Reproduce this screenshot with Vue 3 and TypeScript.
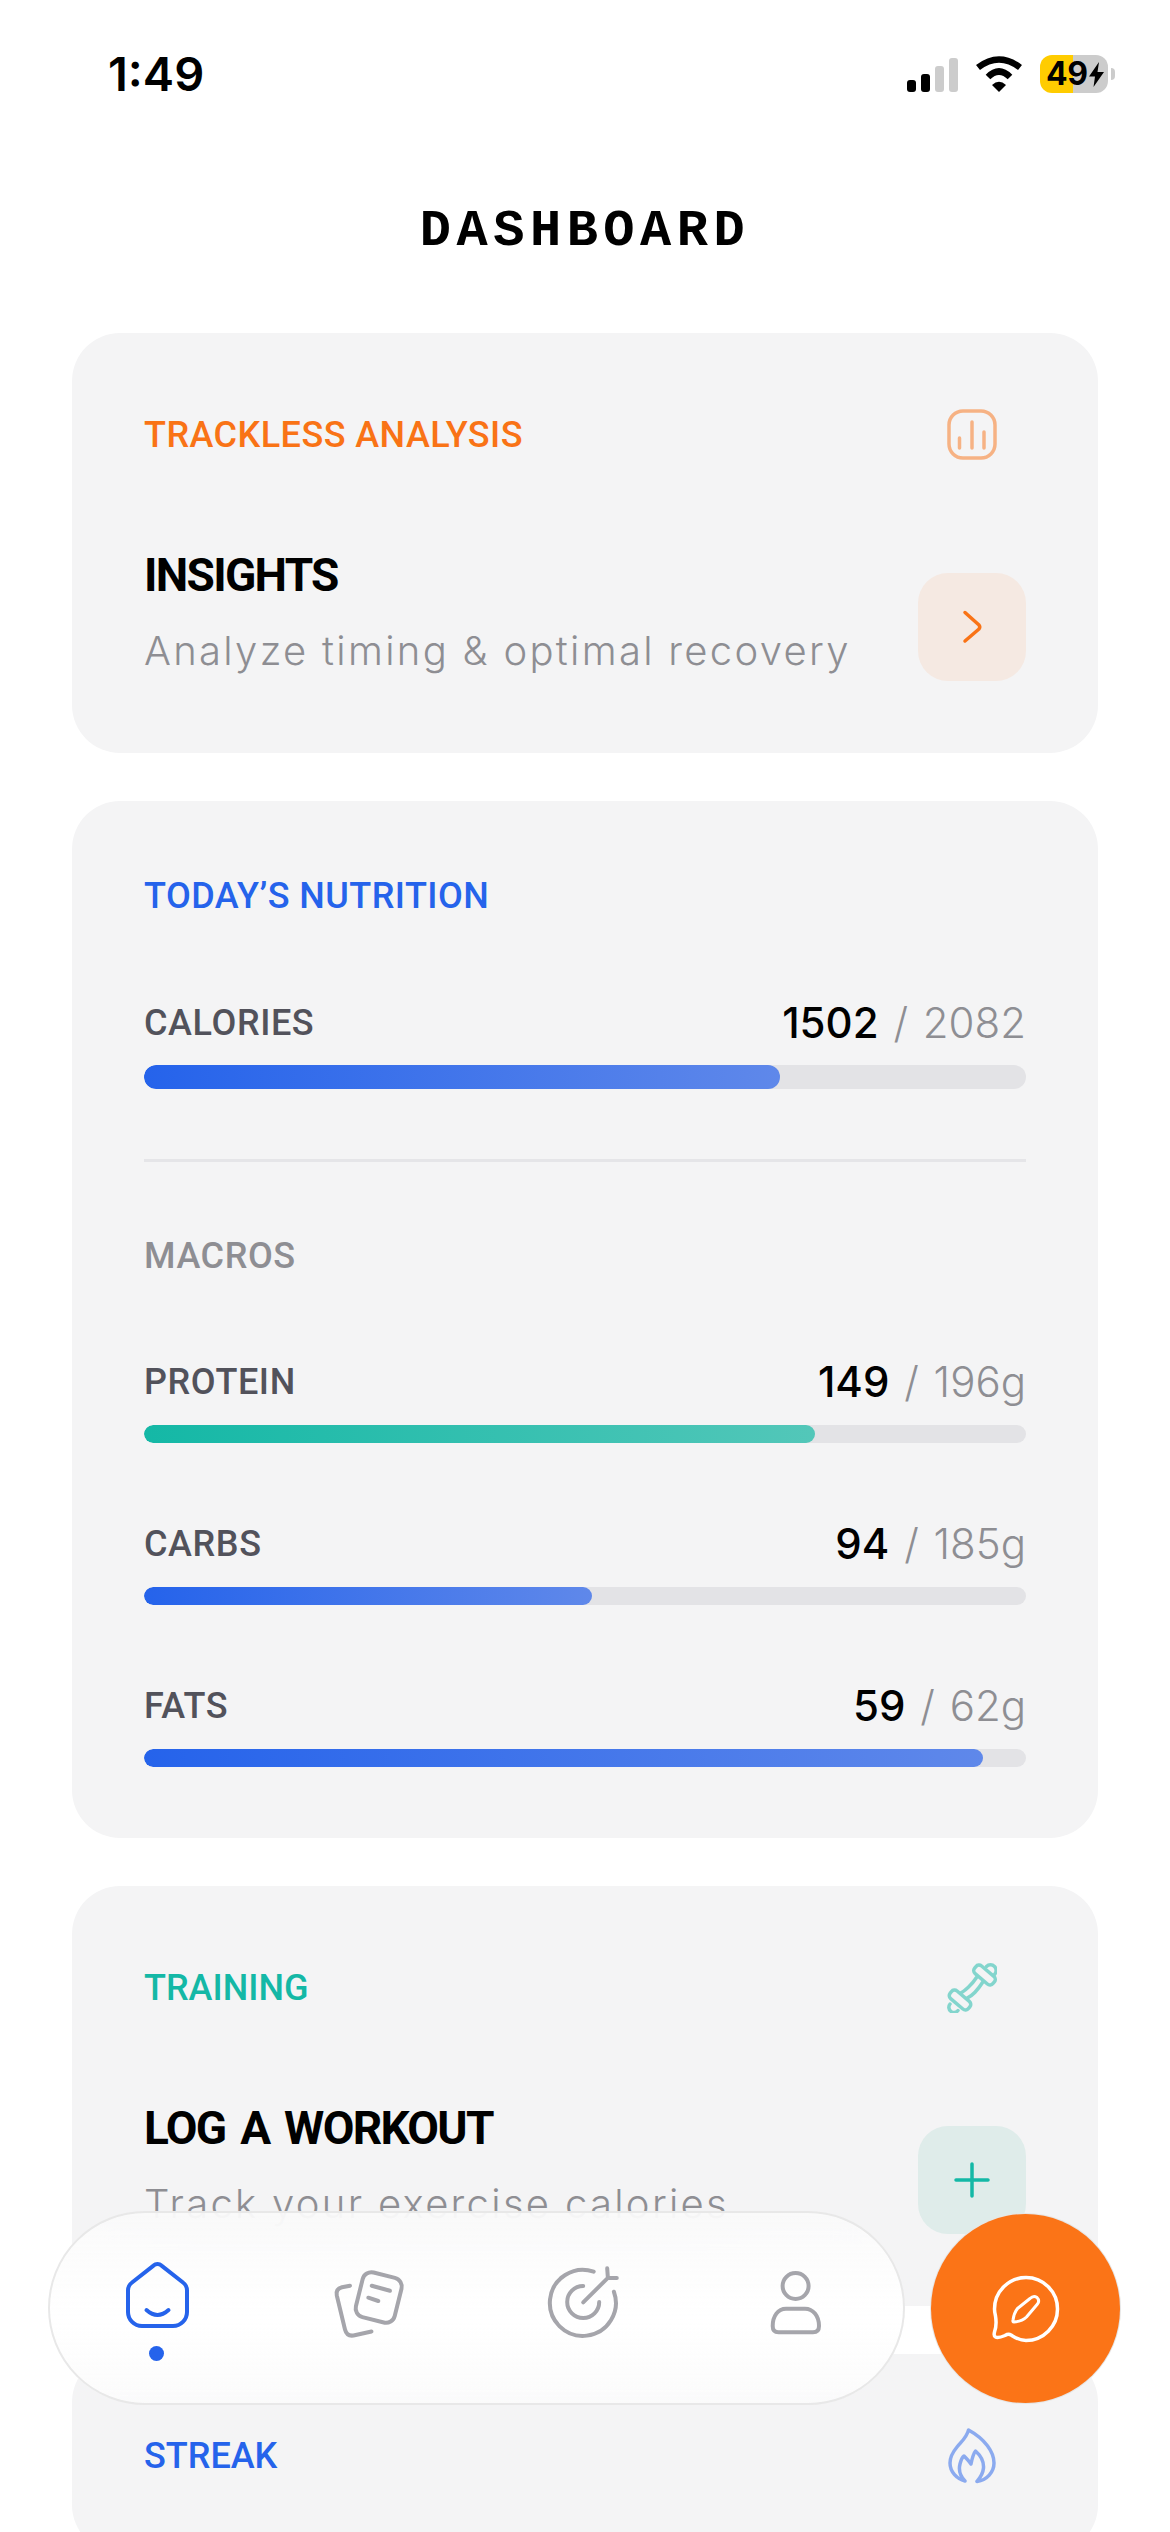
<template>
  <div class="screen">
    <div class="status">
      <span class="time">1:49</span>
      <div class="status-right">
        <div class="signal">
          <i class="on s1"></i><i class="on s2"></i><i class="s3"></i><i class="s4"></i>
        </div>
        <svg class="wifi" width="48" height="36" viewBox="0 0 48 36" fill="none" stroke="#000" stroke-width="6.5">
          <path d="M3 11.5Q24-4.5 45 11.5" />
          <path d="M13 21Q24 10 35 21" />
          <path d="M24 36L17 29Q24 22.5 31 29Z" fill="#000" stroke="none" />
        </svg>
        <div class="battery">
          <span class="batt-num">49</span>
          <svg width="15" height="25" viewBox="0 0 15 25"><path d="M10 0L0 14.5H6L4.5 25L15 10H8.5Z" fill="#000" /></svg>
        </div>
        <i class="nub"></i>
      </div>
    </div>

    <h1 class="page-title">DASHBOARD</h1>

    <section class="card">
      <div class="card-head">
        <span class="label orange wide">TRACKLESS ANALYSIS</span>
        <svg class="tint" width="50" height="51" viewBox="0 0 50 51" fill="none" stroke="#f97316" stroke-width="3.5" stroke-linecap="round">
          <rect x="2" y="2" width="46" height="47" rx="14" />
          <path d="M12.5 29V39M25 13V39M37 23V39" />
        </svg>
      </div>
      <div class="card-body">
        <div class="copy">
          <div class="title">INSIGHTS</div>
          <div class="sub">Analyze timing &amp; optimal recovery</div>
        </div>
        <div class="action action-orange">
          <svg width="24" height="36" viewBox="0 0 24 36" fill="none" stroke="#f97316" stroke-width="3.5" stroke-linecap="round" stroke-linejoin="round">
            <path d="M5 3.5L19 16Q20.5 18 19 20L5 32" />
          </svg>
        </div>
      </div>
    </section>

    <section class="card nutrition">
      <div class="nutrition-head label blue wide">TODAY’S NUTRITION</div>
      <div class="row calories-row">
        <span class="row-name">CALORIES</span>
        <span class="amount"><b>{{ calories.value }}</b> / {{ calories.goal }}</span>
      </div>
      <div class="track thick">
        <div class="fill" :style="{ width: pct(calories) + '%' }"></div>
      </div>
      <div class="divider"></div>
      <div class="macros-label">MACROS</div>
      <div v-for="m in macros" :key="m.name" class="macro">
        <div class="row">
          <span class="row-name">{{ m.name }}</span>
          <span class="amount"><b>{{ m.value }}</b> / {{ m.goal }}g</span>
        </div>
        <div class="track">
          <div class="fill" :class="{ teal: m.teal }" :style="{ width: pct(m) + '%' }"></div>
        </div>
      </div>
    </section>

    <section class="card">
      <div class="card-head">
        <span class="label teal-text">TRAINING</span>
        <svg class="tint" width="50" height="51" viewBox="0 0 50 51" fill="none" stroke="#14b8a6" stroke-width="3.5" stroke-linecap="round" stroke-linejoin="round">
          <rect x="25.5" y="8" width="24" height="10" rx="4" transform="rotate(40 37.5 13)" />
          <rect x="1" y="33" width="24" height="10" rx="4" transform="rotate(40 13 38)" />
          <path d="M29.7 15.3Q26 21 21.3 25.3T14.7 30.3M35.7 20.3Q32 26 28 30.3T19.7 36.3" />
          <path d="M39.5 4.5A5.5 5.5 0 1 1 47.5 12.5M3 42A5 5 0 1 0 11 48.5" />
        </svg>
      </div>
      <div class="card-body">
        <div class="copy">
          <div class="title">LOG A WORKOUT</div>
          <div class="sub">Track your exercise calories</div>
        </div>
        <div class="action action-teal">
          <svg width="36" height="36" viewBox="0 0 36 36" stroke="#14b8a6" stroke-width="3.5" stroke-linecap="round">
            <path d="M2 18H34M18 2V34" />
          </svg>
        </div>
      </div>
    </section>

    <section class="card">
      <div class="card-head">
        <span class="label blue">STREAK</span>
        <svg class="tint" width="50" height="57" viewBox="0 0 50 57" fill="none" stroke="#2563eb" stroke-width="3.5" stroke-linejoin="round">
          <path d="M21.5 3C20 10 15 14 10 20C5 26 3 31 3 36C3 45 10 52 18 54C13 49 11.5 43 13 37C14 33 15.5 30 17 29C19 31 22 34 24 37C25 32 26 27 28.5 24C33 28 37 34 36.5 41C36 46 33 51 30 54.5C40 53 47 45 47 36C47 25 38 12 21.5 3Z" />
        </svg>
      </div>
    </section>

    <nav class="tabbar">
      <div class="tab">
        <svg width="80" height="80" viewBox="0 0 80 80" fill="none" stroke="#2563eb" stroke-width="4" stroke-linecap="round" stroke-linejoin="round">
          <path d="M36.5 3.6a6 6 0 0 1 8 0L66 20.5a10 10 0 0 1 4 8V50a14 14 0 0 1-14 14H25a14 14 0 0 1-14-14V28.5a10 10 0 0 1 4-8Z" />
          <path d="M29.5 48Q40.5 58 51.5 48" />
        </svg>
        <i class="tab-dot"></i>
      </div>
      <div class="tab">
        <svg width="80" height="80" viewBox="0 0 80 80" fill="none" stroke="#a5a5ab" stroke-width="4" stroke-linecap="round" stroke-linejoin="round">
          <rect x="28.7" y="12.5" width="40" height="46" rx="9" transform="rotate(14 48.7 35.5)" />
          <path d="M41.7 23.7L60 28.7M38.3 35.7L48.3 39" />
          <path d="M20 23.7L12 25.3Q5.5 27 6.8 33.5L15 67.5Q16.8 74.5 23.5 73.5L41.5 69.5" />
        </svg>
      </div>
      <div class="tab">
        <svg width="80" height="80" viewBox="0 0 80 80" fill="none" stroke="#a5a5ab" stroke-width="4" stroke-linecap="round" stroke-linejoin="round">
          <path d="M50.7 9.7A33 33 0 1 0 70.9 29.7" />
          <path d="M40.2 24A16 16 0 1 0 56.2 40" />
          <path d="M40.2 40.3L65.4 15.3M64.2 6.3L64.9 16H73.8" />
        </svg>
      </div>
      <div class="tab">
        <svg width="80" height="80" viewBox="0 0 80 80" fill="none" stroke="#a5a5ab" stroke-width="4" stroke-linejoin="round">
          <ellipse cx="39.6" cy="24" rx="13" ry="13" />
          <path d="M30 46.7H49C57 46.7 63 54 63 64Q63 70.3 57 70.3H22.5Q16.7 70.3 16.7 64C16.7 54 22 46.7 30 46.7Z" />
        </svg>
      </div>
    </nav>

    <div class="fab">
      <svg width="80" height="80" viewBox="0 0 80 80" fill="none" stroke="#fff" stroke-width="3.5" stroke-linejoin="round">
        <path d="M40 8.5A31.5 31.5 0 1 1 40 71.5C33 71.5 29 68.5 25 66Q22.5 64.5 19 66.5Q12 69.5 9.5 68Q7.5 67 8.5 63Q11 56 9.5 47Q8.5 43 8.5 40A31.5 31.5 0 0 1 40 8.5Z" />
        <path stroke-width="3" d="M44 29.5Q47.5 26 51 28.5Q54 31.5 51.5 35L40.5 48Q36 52.5 28 53Q26.5 53 27 51Q28 44 31.5 39.5Z" />
      </svg>
    </div>
  </div>
</template>

<script setup lang="ts">
interface Goal {
  value: number;
  goal: number;
}

interface Macro extends Goal {
  name: string;
  teal?: boolean;
}

const calories: Goal = { value: 1502, goal: 2082 };

const macros: Macro[] = [
  { name: "PROTEIN", value: 149, goal: 196, teal: true },
  { name: "CARBS", value: 94, goal: 185 },
  { name: "FATS", value: 59, goal: 62 },
];

function pct(item: Goal) {
  return Math.min(100, (item.value / item.goal) * 100);
}
</script>

<style>
html,
body {
  background: #fff;
  overflow: hidden;
}
</style>

<style scoped>
.screen {
  position: relative;
  width: 1170px;
  height: 2532px;
  overflow: hidden;
  background: #fff;
  font-family: Roboto, "Liberation Sans", sans-serif;
  color: #000;
}

/* status bar */
.status {
  display: flex;
  justify-content: space-between;
  align-items: center;
  height: 38px;
  padding: 55px 55px 0 108px;
}
.time {
  font-family: Inter, sans-serif;
  font-size: 47px;
  font-weight: 600;
  line-height: 38px;
}
.status-right {
  display: flex;
  align-items: center;
}
.signal {
  display: flex;
  align-items: flex-end;
  gap: 5px;
  height: 34px;
  margin: 2px 17px 0 0;
}
.signal i {
  width: 9px;
  border-radius: 3px;
  background: #ccc;
}
.signal .on {
  background: #000;
}
.s1 { height: 12px; }
.s2 { height: 18px; }
.s3 { height: 26px; }
.s4 { height: 34px; }
.wifi {
  margin-right: 17px;
}
.battery {
  display: flex;
  align-items: center;
  gap: 2px;
  width: 68px;
  height: 38px;
  padding-left: 6px;
  box-sizing: border-box;
  border-radius: 12px;
  background: linear-gradient(90deg, #ffcc00 33px, #ccc 33px);
}
.batt-num {
  font-family: Inter, sans-serif;
  font-size: 32px;
  font-weight: 700;
  line-height: 38px;
  letter-spacing: -0.5px;
}
.nub {
  width: 4px;
  height: 12px;
  margin-left: 3px;
  border-radius: 0 4px 4px 0;
  background: #ccc;
}

.page-title {
  margin: 109px 0 71px;
  font-family: "Liberation Mono", monospace;
  font-size: 52px;
  font-weight: 700;
  line-height: 60px;
  letter-spacing: 5.5px;
  text-align: center;
}

/* cards */
.card {
  margin: 0 72px 48px;
  padding: 76px 72px 72px;
  border-radius: 48px;
  background: #f4f4f5;
}
.card-head {
  display: flex;
  justify-content: space-between;
  align-items: center;
  height: 51px;
  padding-right: 29px;
}
.tint {
  flex: none;
  opacity: 0.5;
}
.label {
  font-size: 36px;
  font-weight: 500;
  line-height: 38px;
}
.wide { letter-spacing: 0.45px; }
.orange { color: #f97316; }
.blue { color: #2563eb; }
.teal-text { color: #14b8a6; }

.card-body {
  display: flex;
  justify-content: space-between;
  align-items: flex-end;
  margin-top: 87px;
}
.title {
  font-size: 46px;
  font-weight: 700;
  line-height: 56px;
  letter-spacing: -1.7px;
  word-spacing: 5px;
}
.sub {
  margin: 24px 0 6px;
  font-family: Inter, sans-serif;
  font-size: 40px;
  font-weight: 300;
  line-height: 48px;
  letter-spacing: 2.3px;
  color: #8e8e93;
}
.action {
  display: flex;
  justify-content: center;
  align-items: center;
  flex: none;
  width: 108px;
  height: 108px;
  border-radius: 30px;
}
.action-orange { background: #f5e9e2; }
.action-teal { background: #dfecea; }

/* nutrition */
.nutrition {
  padding-bottom: 71px;
}
.nutrition-head {
  height: 38px;
}
.row {
  display: flex;
  justify-content: space-between;
  align-items: center;
  height: 48px;
}
.calories-row {
  margin-top: 84px;
}
.row-name {
  font-size: 36px;
  font-weight: 500;
  letter-spacing: 0.6px;
  color: #52525b;
}
.amount {
  font-family: Inter, sans-serif;
  font-size: 42px;
  font-weight: 300;
  line-height: 48px;
  word-spacing: 3px;
  color: #8e8e93;
}
.amount b {
  font-weight: 500;
  color: #000;
}
.track {
  height: 18px;
  margin-top: 19px;
  border-radius: 9px;
  background: #e3e3e6;
  overflow: hidden;
}
.track.thick {
  height: 24px;
  margin-top: 18px;
  border-radius: 12px;
}
.fill {
  height: 100%;
  border-radius: inherit;
  background: linear-gradient(90deg, #2563eb, #5f88ea);
}
.fill.teal {
  background: linear-gradient(90deg, #14b8a6, #53c7b9);
}
.divider {
  height: 3px;
  margin-top: 70px;
  background: #e5e5e8;
}
.macros-label {
  margin-top: 75px;
  font-size: 36px;
  font-weight: 500;
  line-height: 38px;
  letter-spacing: 0.6px;
  color: #8e8e93;
}
.macro {
  margin-top: 77px;
}
.macros-label + .macro {
  margin-top: 83px;
}

/* floating nav */
.tabbar {
  position: absolute;
  left: 48px;
  top: 2211px;
  display: flex;
  box-sizing: border-box;
  width: 857px;
  height: 194px;
  padding: 49px 0 0 0;
  border: 2px solid #e8e8e8;
  border-radius: 97px;
  background: linear-gradient(180deg, rgba(250, 250, 250, 0.9), rgba(255, 255, 255, 0.97) 55%, rgba(251, 251, 251, 0.9));
  backdrop-filter: blur(30px);
}
.tab {
  display: flex;
  flex-direction: column;
  align-items: center;
  width: 214px;
}
.tab-dot {
  width: 15px;
  height: 15px;
  margin-top: 4px;
  border-radius: 50%;
  background: #2563eb;
}
.fab {
  position: absolute;
  left: 931px;
  top: 2214px;
  display: flex;
  justify-content: center;
  align-items: center;
  width: 189px;
  height: 189px;
  border-radius: 50%;
  background: #fb7417;
  box-shadow: 0 0 0 1px #e6e6e6;
}
</style>
